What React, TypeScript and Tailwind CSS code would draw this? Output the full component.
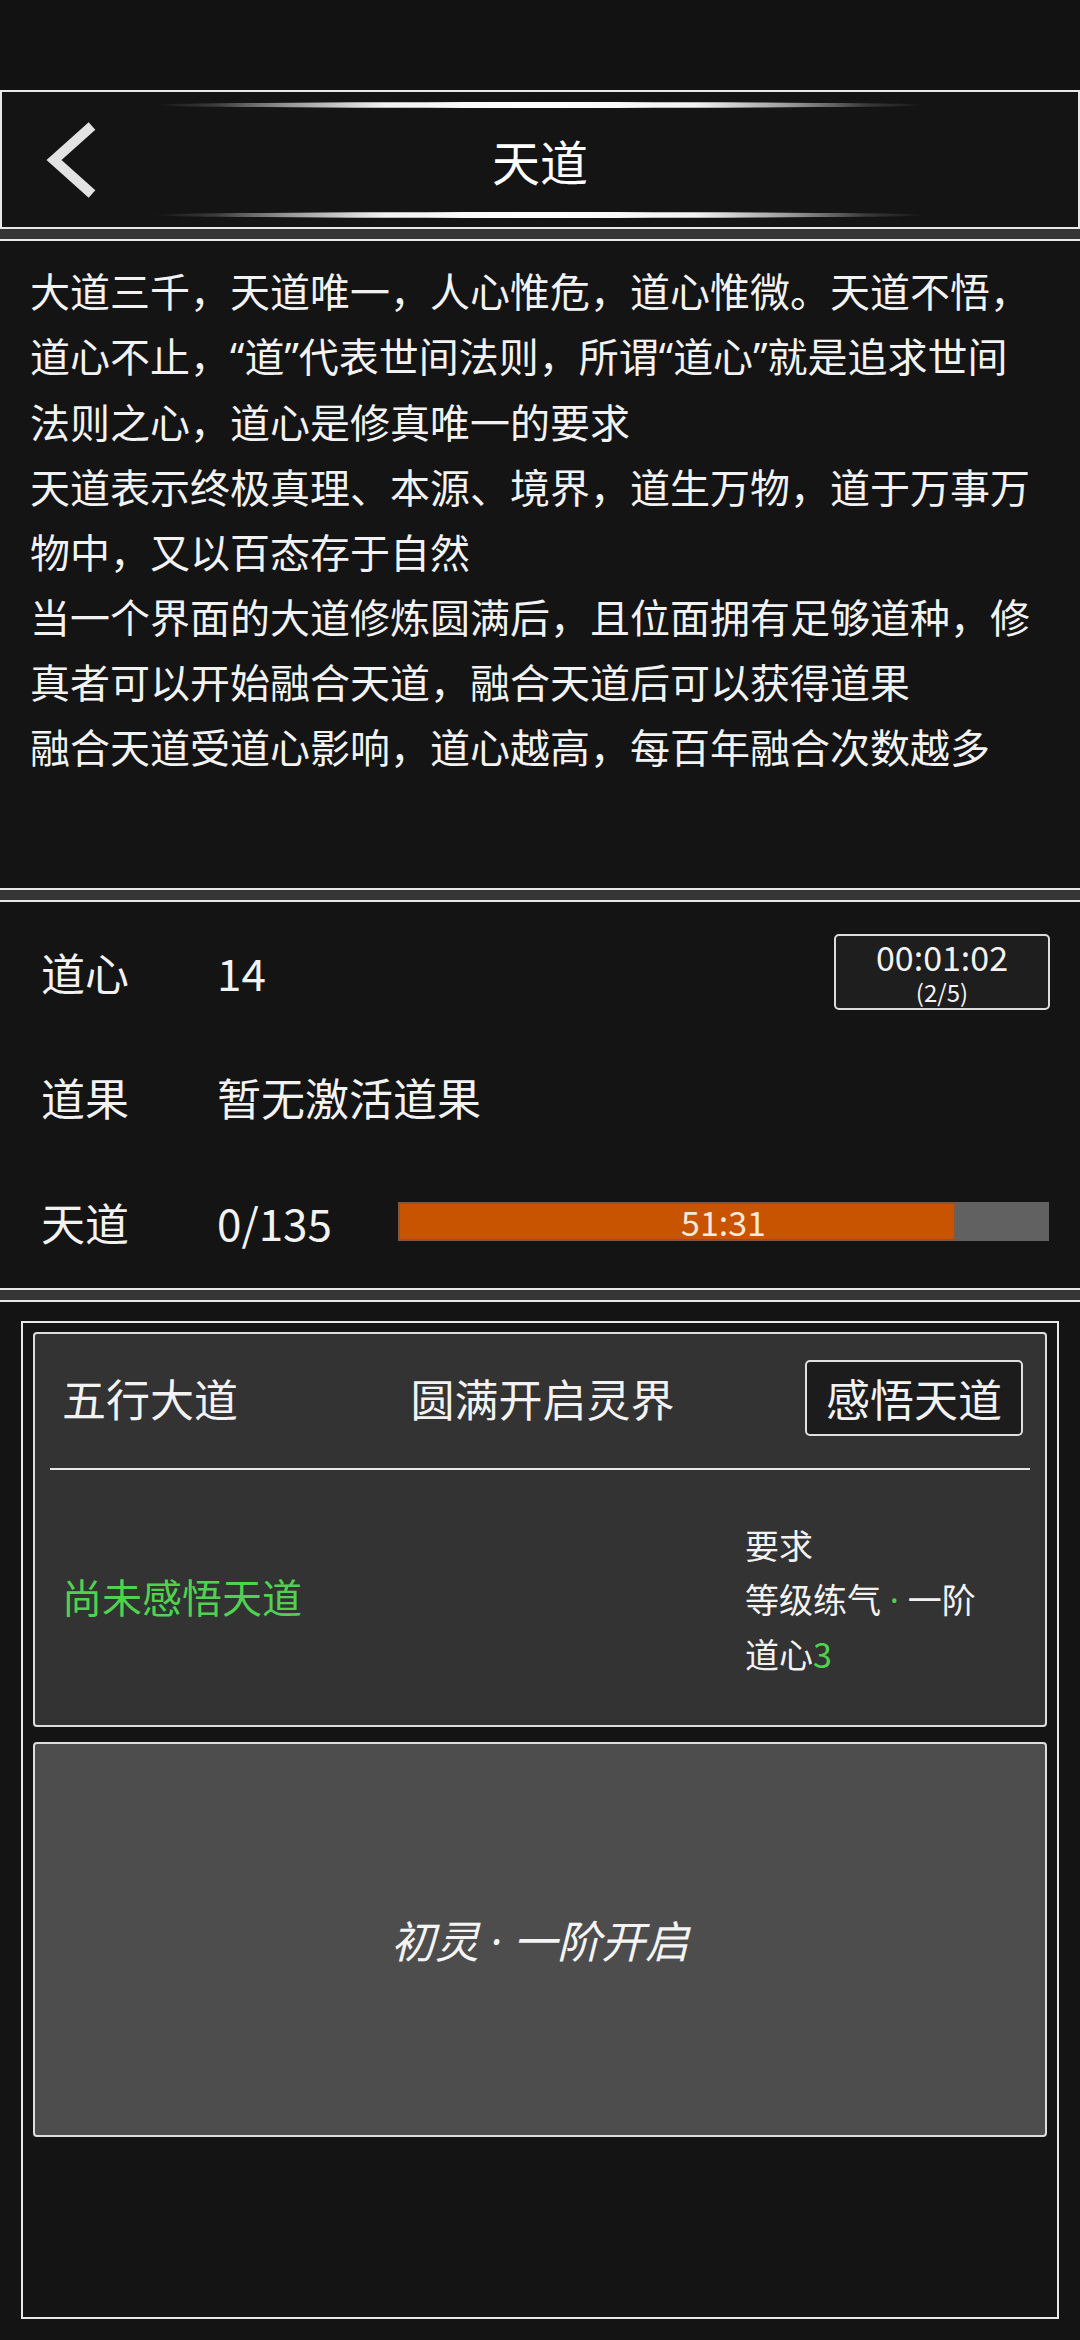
import React from "react";

// narrow punctuation, as the game font draws quotes and middle dots
const N = ({ c }: { c: string }) => (
  <span className="font-['Noto_Sans','Open_Sans',sans-serif]">{c}</span>
);

const introLines: React.ReactNode[] = [
  "大道三千，天道唯一，人心惟危，道心惟微。天道不悟，",
  <>
    道心不止，<N c="“" />道<N c="”" />代表世间法则，所谓<N c="“" />道心<N c="”" />就是追求世间
  </>,
  "法则之心，道心是修真唯一的要求",
  "天道表示终极真理、本源、境界，道生万物，道于万事万",
  "物中，又以百态存于自然",
  "当一个界面的大道修炼圆满后，且位面拥有足够道种，修",
  "真者可以开始融合天道，融合天道后可以获得道果",
  "融合天道受道心影响，道心越高，每百年融合次数越多",
];

const GlowLine = () => (
  <div className="mx-[150px] h-[6px] rounded-[50%] bg-[linear-gradient(90deg,transparent,#3a3a3a_8%,#9a9a9a_18%,#f2f2f2_30%,#ffffff_50%,#f2f2f2_70%,#9a9a9a_82%,#3a3a3a_92%,transparent)]" />
);

const Band = () => <div className="h-[10px] bg-[#353535]" />;

const App = () => {
  const progress = 85.7;
  return (
    <div className="w-[1080px] min-h-[2340px] bg-[#121212] text-[#f2f2f2] font-['Noto_Sans_CJK_SC','Noto_Sans',sans-serif] flex flex-col">
      {/* status area */}
      <div className="h-[90px] shrink-0" />

      {/* header */}
      <div className="h-[139px] shrink-0 border-2 border-[#e8e8e8] bg-[#141414] flex flex-col pt-[10px] pb-[9px]">
        <GlowLine />
        <div className="flex-1 grid grid-cols-[1fr_auto_1fr] items-center">
          <div className="pl-[44px] flex items-center">
            <svg width="52" height="76" viewBox="0 0 52 76">
              <polyline
                points="46,4 8,38 46,72"
                fill="none"
                stroke="#e2e2e2"
                strokeWidth="10"
                strokeLinejoin="miter"
              />
            </svg>
          </div>
          <div className="text-[48px] leading-none text-white">天道</div>
          <div />
        </div>
        <GlowLine />
      </div>
      <Band />

      {/* description */}
      <div className="h-[651px] shrink-0 border-y-2 border-[#e8e8e8] bg-[#141414] pt-[17px] pl-[30px]">
        {introLines.map((line, i) => (
          <div key={i} className="text-[40px] leading-[65px] whitespace-nowrap">
            {line}
          </div>
        ))}
      </div>
      <Band />

      {/* stats */}
      <div className="h-[390px] shrink-0 border-y-2 border-[#e8e8e8] bg-[#141414] pt-[7px] pl-[41px] pr-[30px] text-[44px]">
        <div className="h-[125px] flex items-center">
          <div className="w-[176px]">道心</div>
          <div className="flex-1">14</div>
          <div className="w-[216px] h-[76px] border-2 border-[#dcdcdc] rounded-[5px] bg-[#1e1e1e] flex flex-col items-center justify-center">
            <div className="text-[34px] leading-none">00:01:02</div>
            <div className="mt-[6px] text-[24px] leading-none">(2/5)</div>
          </div>
        </div>
        <div className="h-[125px] flex items-center">
          <div className="w-[176px]">道果</div>
          <div>暂无激活道果</div>
        </div>
        <div className="h-[125px] flex items-center">
          <div className="w-[176px]">天道</div>
          <div className="w-[181px]">0/135</div>
          <div className="relative flex-1 h-[39px] bg-[#616161] mr-[1px]">
            <div
              className="h-full bg-[#c85300] border-2 border-[#7d5843]"
              style={{ width: `${progress}%` }}
            />
            <div className="absolute inset-0 flex items-center justify-center text-[34px] leading-none text-[#f6e8da]">
              51:31
            </div>
          </div>
        </div>
      </div>
      <Band />

      {/* dao list */}
      <div className="flex-1 border-t-2 border-[#e8e8e8] bg-[#141414] pt-[19px] pb-[21px] px-[21px] flex">
        <div className="flex-1 border-2 border-[#e8e8e8] pt-[9px] px-[10px] flex flex-col gap-[15px]">
          <div className="h-[395px] border-2 border-[#dddddd] rounded-[4px] bg-[#333333] flex flex-col">
            <div className="mt-[26px] h-[76px] pl-[27px] pr-[22px] grid grid-cols-[1fr_auto_1fr] items-center text-[44px]">
              <div>五行大道</div>
              <div>圆满开启灵界</div>
              <div className="justify-self-end h-[76px] w-[218px] border-2 border-[#e0e0e0] rounded-[5px] bg-[#1c1c1c] flex items-center justify-center">
                感悟天道
              </div>
            </div>
            <div className="mt-[32px] mx-[15px] h-[2px] bg-[#e8e8e8]" />
            <div className="flex-1 flex items-center justify-between pl-[27px] pb-[4px]">
              <div className="text-[40px] text-[#4fd24f]">尚未感悟天道</div>
              <div className="w-[300px] pt-[8px] text-[34px] leading-[54px]">
                <div>要求</div>
                <div>
                  等级练气
                  <span className="text-[#4fd24f]">
                    <N c=" · " />
                  </span>
                  一阶
                </div>
                <div>
                  道心<span className="text-[#4fd24f]">3</span>
                </div>
              </div>
            </div>
          </div>
          <div className="h-[395px] border-2 border-[#dddddd] rounded-[4px] bg-[#4d4d4d] flex items-center justify-center">
            <div className="text-[44px] italic text-[#f4f4f4]">
              初灵<N c=" · " />一阶开启
            </div>
          </div>
        </div>
      </div>
    </div>
  );
};

export default App;
